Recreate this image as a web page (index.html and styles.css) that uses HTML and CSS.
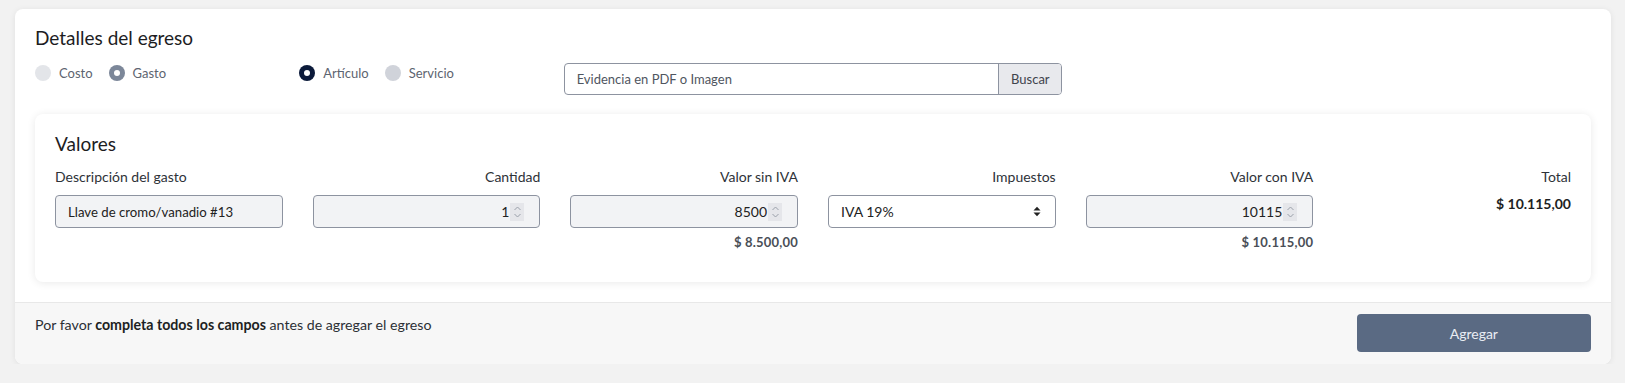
FILE: index.html
```html
<!DOCTYPE html>
<html lang="es">
<head>
<meta charset="utf-8">
<title>Detalles del egreso</title>
<link rel="stylesheet" href="styles.css">
</head>
<body>
<div class="page">
  <div class="card">
    <div class="card-body">
      <h2 class="card-title">Detalles del egreso</h2>
      <div class="grid options">
        <div class="radio-group">
          <label class="radio"><span class="dot dot-off-light"></span><span>Costo</span></label>
          <label class="radio"><span class="dot dot-on-muted"></span><span>Gasto</span></label>
        </div>
        <div class="radio-group">
          <label class="radio"><span class="dot dot-on"></span><span>Artículo</span></label>
          <label class="radio"><span class="dot dot-off"></span><span>Servicio</span></label>
        </div>
        <div class="file-input">
          <span class="file-label">Evidencia en PDF o Imagen</span>
          <span class="file-btn">Buscar</span>
        </div>
      </div>

      <div class="inner-card">
        <h3 class="inner-title">Valores</h3>
        <div class="grid fields">
          <div class="field">
            <div class="field-label">Descripción del gasto</div>
            <div class="input input-text">Llave de cromo/vanadio #13</div>
          </div>
          <div class="field right">
            <div class="field-label">Cantidad</div>
            <div class="input input-num"><span>1</span><span class="spin"><svg width="9" height="14" viewBox="0 0 9 14"><path d="M1.5 5 L4.5 2 L7.5 5" fill="none" stroke="#9aa0aa" stroke-width="1"/><path d="M1.5 9 L4.5 12 L7.5 9" fill="none" stroke="#9aa0aa" stroke-width="1"/></svg></span></div>
          </div>
          <div class="field right">
            <div class="field-label">Valor sin IVA</div>
            <div class="input input-num"><span>8500</span><span class="spin"><svg width="9" height="14" viewBox="0 0 9 14"><path d="M1.5 5 L4.5 2 L7.5 5" fill="none" stroke="#9aa0aa" stroke-width="1"/><path d="M1.5 9 L4.5 12 L7.5 9" fill="none" stroke="#9aa0aa" stroke-width="1"/></svg></span></div>
            <div class="sub-value">$ 8.500,00</div>
          </div>
          <div class="field right">
            <div class="field-label">Impuestos</div>
            <div class="input input-select"><span>IVA 19%</span><svg width="8" height="11" viewBox="0 0 8 11"><path d="M0.5 4.5 L4 0.8 L7.5 4.5 Z" fill="#222"/><path d="M0.5 6.5 L4 10.2 L7.5 6.5 Z" fill="#222"/></svg></div>
          </div>
          <div class="field right">
            <div class="field-label">Valor con IVA</div>
            <div class="input input-num"><span>10115</span><span class="spin"><svg width="9" height="14" viewBox="0 0 9 14"><path d="M1.5 5 L4.5 2 L7.5 5" fill="none" stroke="#9aa0aa" stroke-width="1"/><path d="M1.5 9 L4.5 12 L7.5 9" fill="none" stroke="#9aa0aa" stroke-width="1"/></svg></span></div>
            <div class="sub-value">$ 10.115,00</div>
          </div>
          <div class="field right">
            <div class="field-label">Total</div>
            <div class="total-value">$ 10.115,00</div>
          </div>
        </div>
      </div>
    </div>
    <div class="card-footer grid">
      <p class="footer-text">Por favor <strong>completa todos los campos</strong> antes de agregar el egreso</p>
      <button class="btn-add" type="button">Agregar</button>
    </div>
  </div>
</div>
</body>
</html>
```

FILE: styles.css
```css
* { box-sizing: border-box; }
html, body { margin: 0; padding: 0; }
body {
  background: #f2f2f2;
  font-family: Lato, "Noto Sans", sans-serif;
  color: #212529;
  font-size: 14px;
}
.page {
  padding: 9px 14px 0 15px;
}
.card {
  background: #ffffff;
  border-radius: 8px;
  box-shadow: 0 1px 6px rgba(0, 0, 0, 0.08);
  overflow: hidden;
}
.card-body {
  padding: 18px 20px 20px 20px;
}
.card-title {
  margin: 0 0 14px 0;
  font-size: 19px;
  font-weight: 400;
  line-height: 22px;
  color: #1d1d1f;
}
.grid {
  display: grid;
  grid-template-columns: repeat(6, 1fr);
  column-gap: 30px;
}
.options {
  margin-bottom: 19px;
  align-items: start;
}
.radio-group {
  display: flex;
  gap: 16px;
  padding-top: 1px;
}
.radio {
  display: flex;
  align-items: center;
  gap: 8px;
  font-size: 13px;
  line-height: 18px;
  color: #5d6470;
}
.dot {
  width: 16px;
  height: 16px;
  border-radius: 50%;
  display: inline-block;
  flex: none;
}
.dot-off-light { background: #e3e5e9; }
.dot-off { background: #d0d3da; }
.dot-on { background: #0b1a3a; position: relative; }
.dot-on-muted { background: #7c8799; position: relative; }
.dot-on::after, .dot-on-muted::after {
  content: "";
  position: absolute;
  left: 5px; top: 5px;
  width: 6px; height: 6px;
  border-radius: 50%;
  background: #fff;
}
.file-input {
  grid-column: 3 / span 2;
  display: flex;
  height: 32px;
  border: 1px solid #8d93a0;
  border-radius: 4px;
  overflow: hidden;
  font-size: 13px;
  color: #50565f;
}
.file-label {
  flex: 1;
  display: flex;
  align-items: center;
  padding-left: 12px;
}
.file-btn {
  width: 63px;
  display: flex;
  align-items: center;
  justify-content: center;
  background: #e8e9ed;
  border-left: 1px solid #8d93a0;
  color: #3f444c;
}
.inner-card {
  background: #fff;
  border-radius: 8px;
  box-shadow: 0 1px 8px rgba(0, 0, 0, 0.09);
  padding: 19px 20px 21px 20px;
}
.inner-title {
  margin: 0 0 12px 0;
  font-size: 19px;
  font-weight: 400;
  line-height: 22px;
  color: #1d1d1f;
}
.fields {
  min-height: 94px;
}
.field-label {
  font-size: 14px;
  line-height: 20px;
  color: #2e3238;
  margin-bottom: 8px;
}
.right { text-align: right; }
.input {
  height: 33px;
  border: 1px solid #8d93a0;
  border-radius: 4px;
  background: #f2f3f5;
  font-size: 14px;
  color: #222;
  display: flex;
  align-items: center;
}
.input-text { padding-left: 12px; font-size: 13.2px; }
.input-num {
  justify-content: flex-end;
  padding-right: 15px;
}
.spin {
  width: 14px;
  height: 18px;
  margin-left: 1px;
  background: #e5e6ea;
  display: flex;
  align-items: center;
  justify-content: center;
}
.input-select {
  background: #fff;
  justify-content: space-between;
  padding: 0 14px 0 12px;
}
.sub-value {
  font-size: 13px;
  font-weight: 700;
  line-height: 16px;
  margin-top: 6px;
  color: #4a4f57;
  letter-spacing: 0.2px;
}
.total-value {
  font-size: 14px;
  font-weight: 700;
  line-height: 20px;
  margin-top: -1px;
  color: #1d1f23;
}
.card-footer {
  background: #f7f7f7;
  border-top: 1px solid #e8e8e8;
  padding: 11px 20px 12px 20px;
  align-items: start;
}
.footer-text {
  grid-column: 1 / span 5;
  margin: 1px 0 0 0;
  font-size: 14.2px;
  line-height: 20px;
  color: #2b2f35;
}
.footer-text strong { font-weight: 700; color: #1d1f23; }
.btn-add {
  grid-column: 6;
  height: 38px;
  border: none;
  border-radius: 4px;
  background: #5a6a83;
  color: #e9edf3;
  font-family: inherit;
  font-size: 14px;
}
```
